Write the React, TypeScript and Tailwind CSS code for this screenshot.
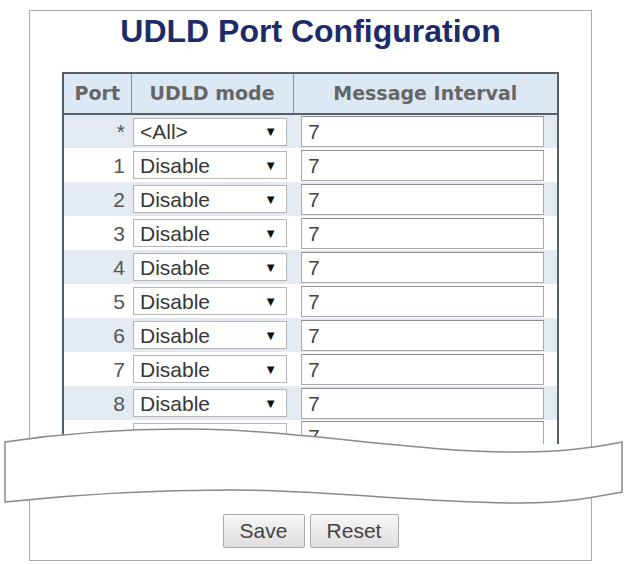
import React from "react";

const rows = ["*", "1", "2", "3", "4", "5", "6", "7", "8", "9"];

export default function App() {
  return (
    <div className="relative w-[629px] h-[564px] bg-white overflow-hidden" style={{ fontFamily: '"Liberation Sans", Arial, sans-serif' }}>
      <div className="ml-[29px] mt-[10px] w-[563px] h-[551px] border border-[#a8a8a8] flex flex-col items-center">
        <h1 className="mt-[0px] text-[32px] leading-[40px] font-bold text-[#1d2c68]">
          UDLD Port Configuration
        </h1>
        <div className="mt-[21px] h-[372px] overflow-hidden">
          <table className="border-collapse border-2 border-[#56606b] w-[497px]">
            <thead>
              <tr className="bg-[#dce8f4] h-[41px]" style={{ fontFamily: '"DejaVu Sans", Verdana, sans-serif' }}>
                <th className="w-[68px] border border-[#7f93a6] border-b-2 border-b-[#56606b] text-[19px] font-bold text-[#666666]">Port</th>
                <th className="w-[162px] border border-[#7f93a6] border-b-2 border-b-[#56606b] text-[19px] font-bold text-[#666666]">UDLD mode</th>
                <th className="border border-[#7f93a6] border-b-2 border-b-[#56606b] text-[19px] font-bold text-[#666666]">Message Interval</th>
              </tr>
            </thead>
            <tbody>
              {rows.map((r, i) => (
                <tr key={r} className={i % 2 === 0 ? "bg-[#e3eaf2] h-[34px]" : "bg-white h-[34px]"}>
                  <td className="pr-[6px] text-right text-[21px] text-[#555555] leading-none">{r}</td>
                  <td className="pl-[2px] pr-[6px]">
                    <div className="h-[28px] flex items-center justify-between border border-[#b4b4b4] bg-white pl-[6px] pr-[9px] text-[21px] text-[#383838] leading-none">
                      <span>{i === 0 ? "<All>" : "Disable"}</span>
                      <span className="text-[13px] text-[#111111]">▼</span>
                    </div>
                  </td>
                  <td className="pl-[8px] pr-[13px]">
                    <div className="h-[31px] flex items-center border border-[#a9a9a9] border-t-[#8c8c8c] bg-white pl-[6px] text-[21px] text-[#444444] leading-none">
                      7
                    </div>
                  </td>
                </tr>
              ))}
            </tbody>
          </table>
        </div>
        <div className="mt-auto mb-[12px] flex gap-[5px]">
          <button className="w-[82px] h-[34px] border border-[#a9a9a9] rounded-[2px] bg-gradient-to-b from-[#f7f7f7] to-[#dedede] text-[21px] text-[#444444]">Save</button>
          <button className="w-[89px] h-[34px] border border-[#a9a9a9] rounded-[2px] bg-gradient-to-b from-[#f7f7f7] to-[#dedede] text-[21px] text-[#444444]">Reset</button>
        </div>
      </div>
      <svg className="absolute inset-0 w-[629px] h-[564px] pointer-events-none" viewBox="0 0 629 564">
        <path
          d="M5,442 C80,431 150,427 230,430 C330,435 420,452 520,452 C570,452 600,446 622,442 L622,492 C600,496 570,503 520,503 C420,503 330,490 230,490 C150,490 80,494 5,502 Z"
          fill="#ffffff"
          stroke="#8a8a8a"
          strokeWidth="1.5"
        />
      </svg>
    </div>
  );
}
